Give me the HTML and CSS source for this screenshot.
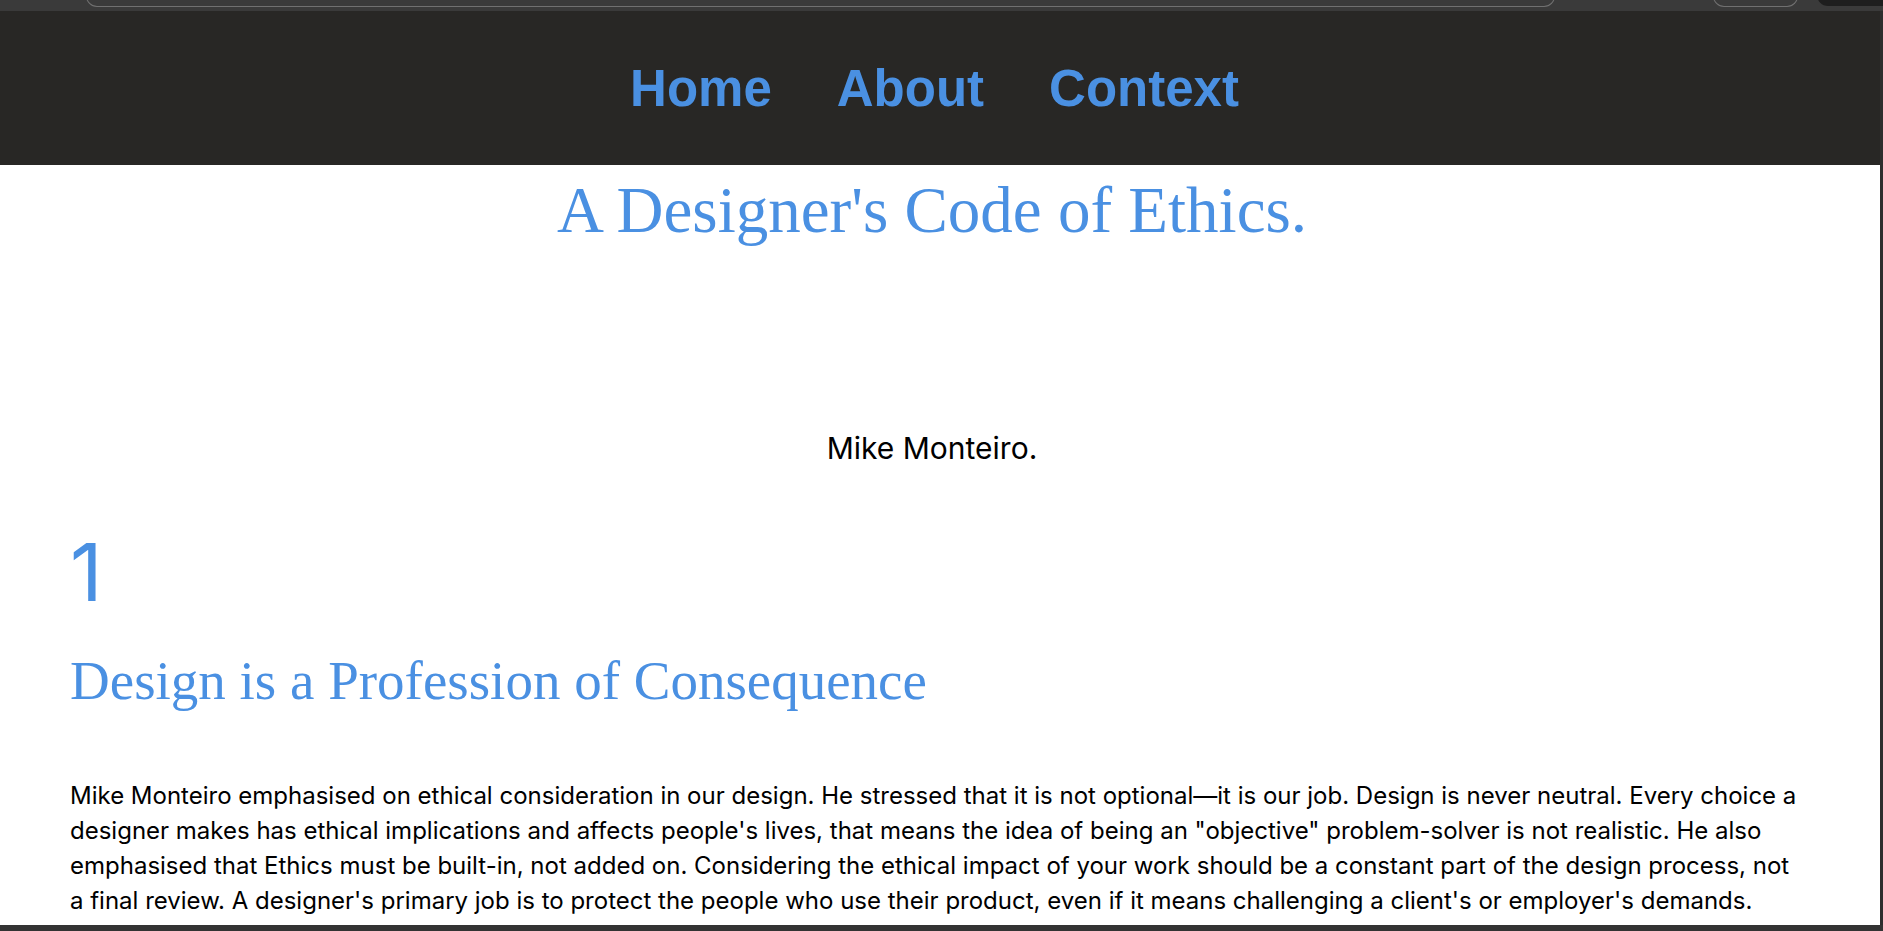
FILE: index.html
```html
<!DOCTYPE html>
<html lang="en">
<head>
<meta charset="utf-8">
<title>A Designer's Code of Ethics</title>
<link rel="stylesheet" href="styles.css">
</head>
<body>
<div class="chrome">
  <div class="urlbar"></div>
  <div class="chip"></div>
  <div class="pill"></div>
</div>
<nav class="nav">
  <a href="#" class="nav-link">Home</a>
  <a href="#" class="nav-link">About</a>
  <a href="#" class="nav-link">Context</a>
</nav>
<main class="main">
  <h1 class="title">A Designer's Code of Ethics.</h1>
  <p class="author">Mike Monteiro.</p>
  <section class="item">
    <div class="num">1</div>
    <h2 class="heading">Design is a Profession of Consequence</h2>
    <p class="text">Mike Monteiro emphasised on ethical consideration in our design. He stressed that it is not optional—it is our job. Design is never neutral. Every choice a designer makes has ethical implications and affects people's lives, that means the idea of being an "objective" problem-solver is not realistic. He also emphasised that Ethics must be built-in, not added on. Considering the ethical impact of your work should be a constant part of the design process, not a final review. A designer's primary job is to protect the people who use their product, even if it means challenging a client's or employer's demands.</p>
  </section>
</main>
<div class="edge-right"></div>
<div class="edge-bottom"></div>
</body>
</html>
```
FILE: styles.css
```css
html, body {
  margin: 0;
  padding: 0;
  background: #ffffff;
  overflow: hidden;
}

body {
  font-family: Inter, "Noto Sans", sans-serif;
  color: #000;
}

.chrome {
  height: 11px;
  background: #3a3a3a;
  display: flex;
  align-items: flex-start;
  overflow: hidden;
}

.urlbar {
  margin-left: 86px;
  width: 1467px;
  height: 16px;
  margin-top: -10px;
  border: 1px solid #707070;
  border-top: none;
  border-radius: 0 0 11px 11px;
  flex: none;
}

.chip {
  margin-left: 158px;
  width: 83px;
  height: 16px;
  margin-top: -10px;
  border: 1px solid #707070;
  border-top: none;
  border-radius: 0 0 11px 11px;
  flex: none;
}

.pill {
  margin-left: 19px;
  flex: 1;
  height: 16px;
  margin-top: -10px;
  background: #1e1e1e;
  border-radius: 0 0 0 11px;
}

.nav {
  height: 154px;
  background: #282725;
  display: flex;
  justify-content: center;
  align-items: center;
  gap: 65px;
  padding-right: 14px;
}

.nav-link {
  font-family: "Liberation Sans", Arial, sans-serif;
  font-weight: 700;
  font-size: 51px;
  color: #4a90e2;
  text-decoration: none;
  line-height: 1;
}

.main {
  padding: 0 89px 0 70px;
}

.title {
  margin: 6px 0 0;
  text-align: center;
  font-family: "Liberation Serif", "Times New Roman", serif;
  font-weight: 400;
  font-size: 65px;
  line-height: 78px;
  color: #4a90e2;
}

.author {
  margin: 181px 0 0;
  text-align: center;
  font-size: 30px;
  line-height: 36px;
  color: #000;
}

.num {
  margin-top: 66px;
  font-size: 80px;
  line-height: 80px;
  color: #4a90e2;
}

.heading {
  margin: 35px 0 0;
  font-family: "Liberation Serif", "Times New Roman", serif;
  font-weight: 400;
  font-size: 55px;
  line-height: 67px;
  color: #4a90e2;
}

.text {
  margin: 64px -14px 0 0;
  font-size: 24px;
  line-height: 35px;
  color: #000;
}

.edge-right {
  position: fixed;
  top: 11px;
  right: 0;
  bottom: 0;
  width: 3px;
  background: #2e2e2e;
}

.edge-bottom {
  position: fixed;
  left: 0;
  right: 0;
  bottom: 0;
  height: 6px;
  background: #333333;
}
```
